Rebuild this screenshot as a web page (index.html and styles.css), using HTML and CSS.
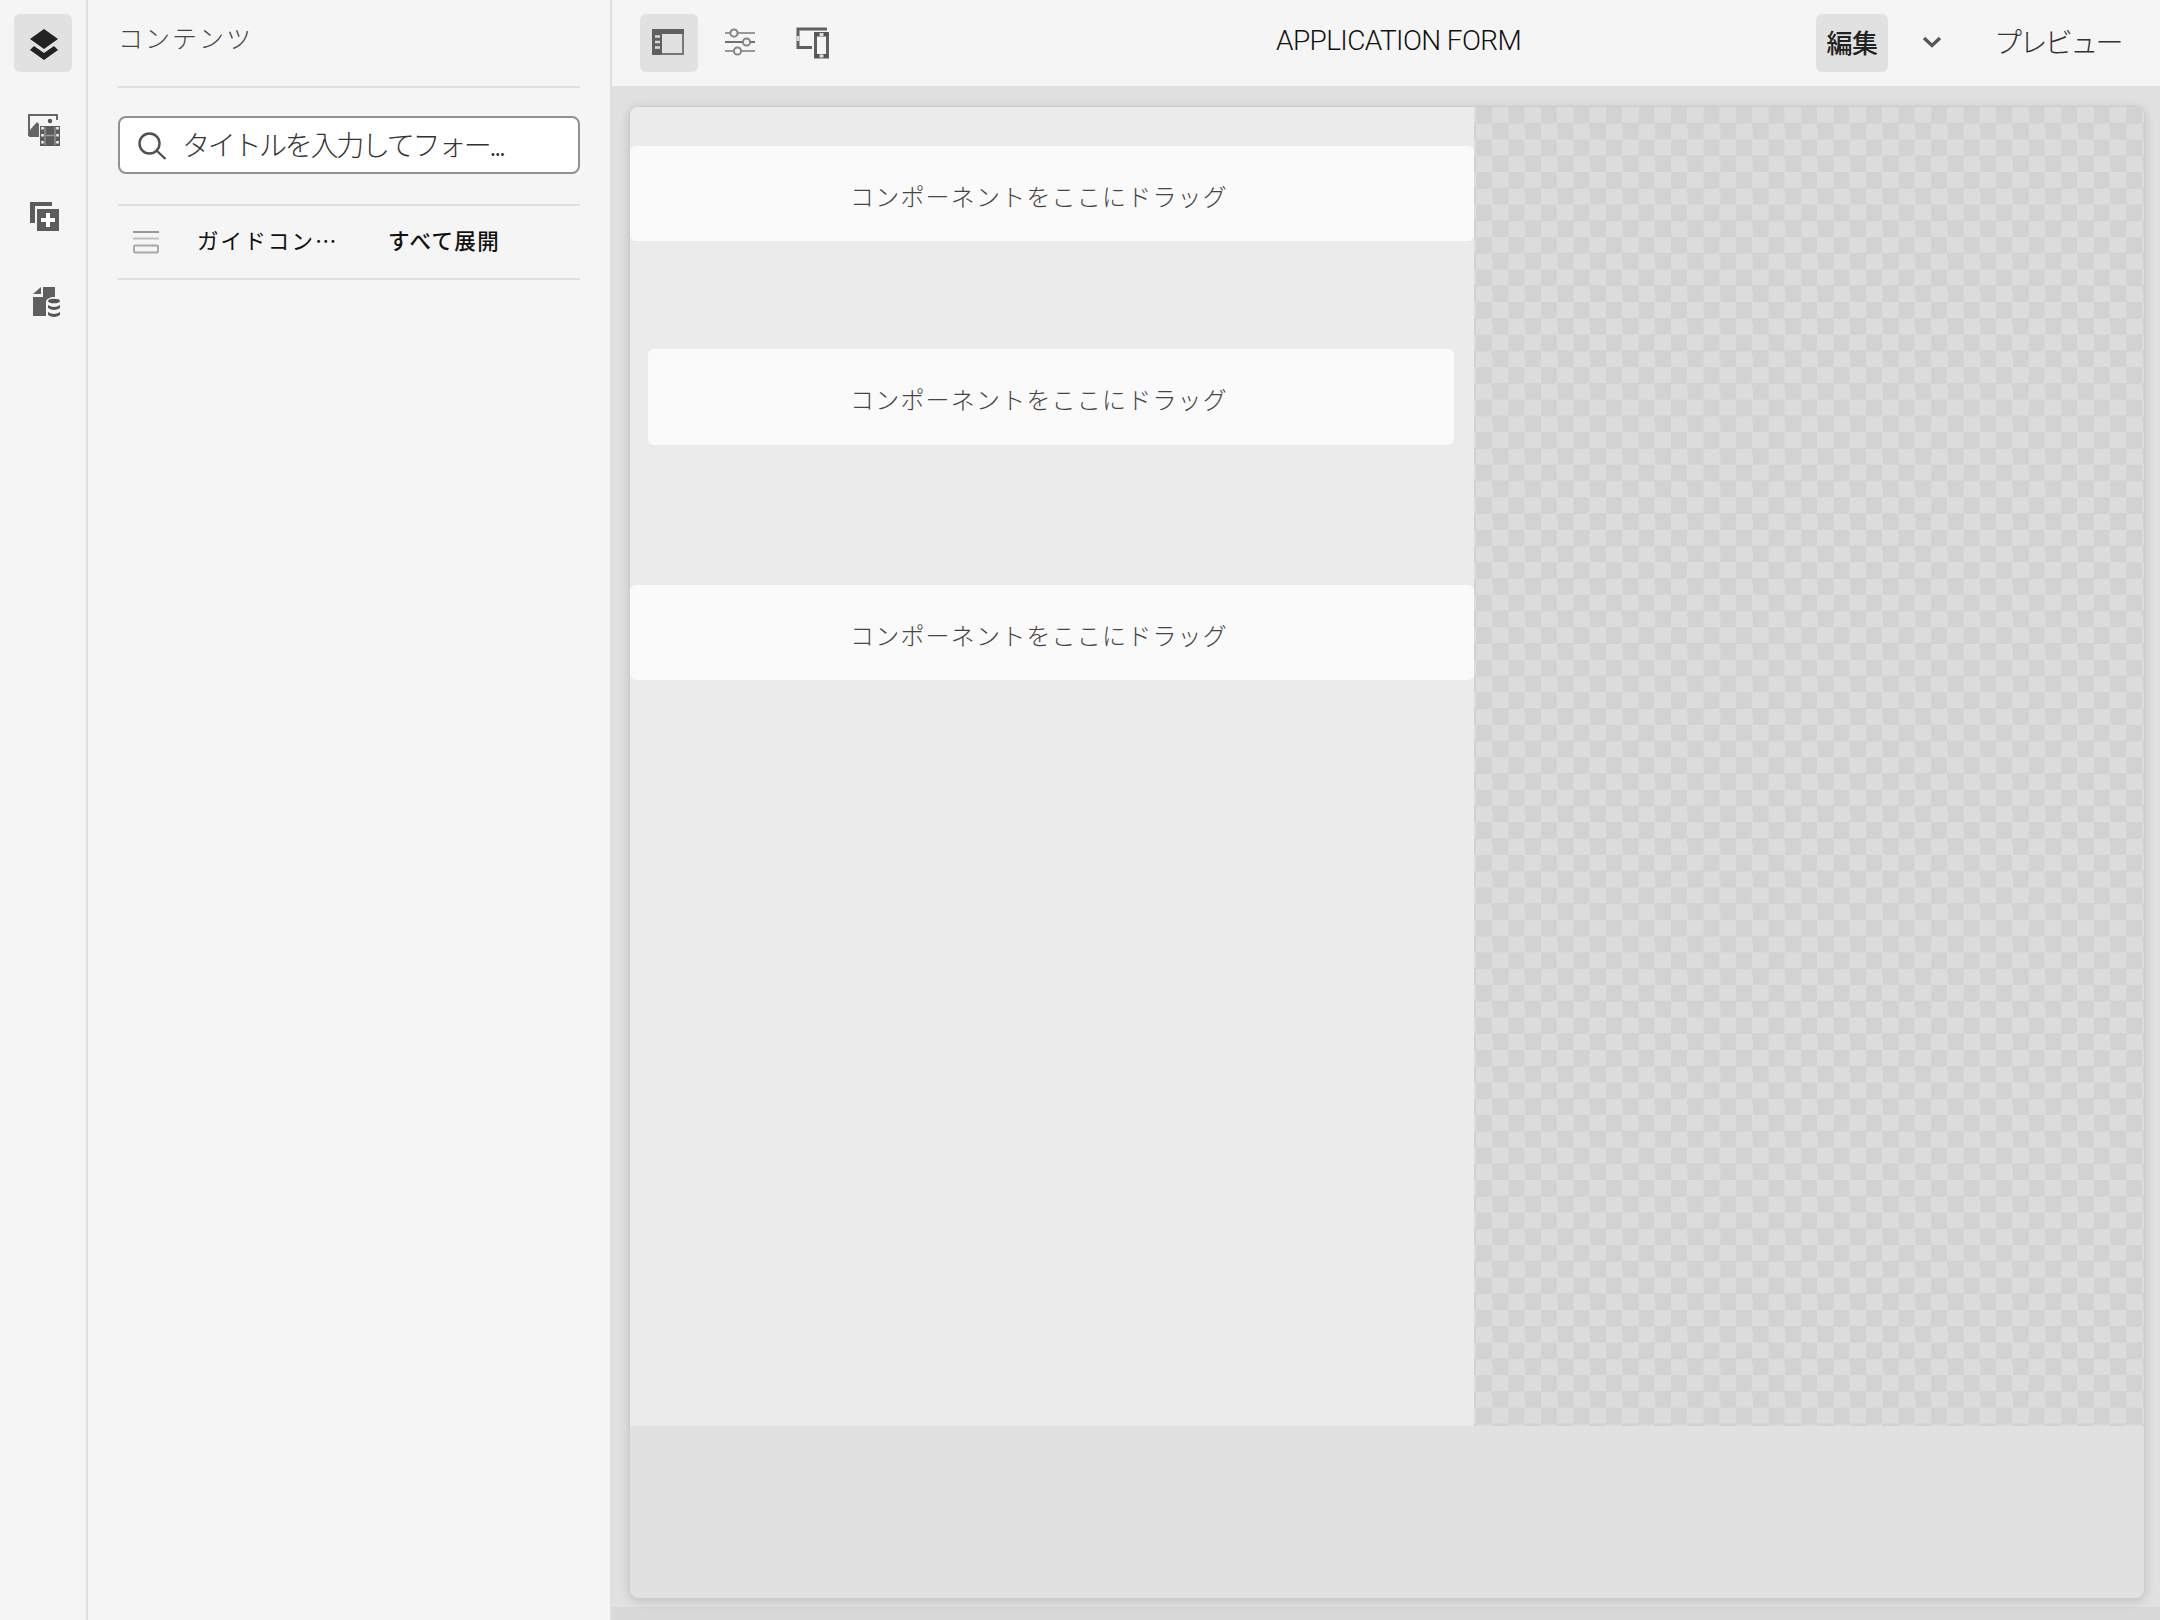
FILE: index.html
```html
<!DOCTYPE html>
<html lang="ja">
<head>
<meta charset="utf-8">
<title>APPLICATION FORM</title>
<link rel="stylesheet" href="styles.css">
</head>
<body>
<div class="app">
  <nav class="rail">
    <button class="tool active"><svg width="32" height="36" viewBox="0 0 32 36"><path fill="#222" d="M16 3 30 13 16 23 2 13ZM6 20 16 27 26 20 30 24 16 34 2 24Z"/></svg></button>
    <button class="tool"><svg class="assets" width="34" height="34" viewBox="0 0 34 34"><path d="M2 23V2H30V7" fill="none" stroke="#666" stroke-width="2"/><path fill="#666" d="M2 18 10 9 12 11V24H2Z"/><circle cx="23" cy="8" r="2.2" fill="#555"/><rect x="13" y="13" width="20" height="20" fill="#5c5c5c"/><path d="M18 14V32M28 14V32" stroke="#aaa"/><path d="M19 22.5H27" stroke="#999" stroke-width="1.5"/><path d="M15.5 14V32M30.5 14V32" stroke="#f5f5f5" stroke-width="2.5" stroke-dasharray="2.5 4.5"/></svg></button>
    <button class="tool"><svg width="32" height="32" viewBox="0 0 32 32"><path fill="#5c5c5c" d="M2 2H24V6H7V23H2ZM9 9H31V31H9Z"/><path stroke="#fff" stroke-width="4" d="M20 13V27M13 20H27"/></svg></button>
    <button class="tool"><svg class="data" width="30" height="34" viewBox="0 0 30 34"><path fill="#5f5f5f" d="M2 9 10 2V9ZM12 2H24V12C19 12 15 14 15 17V31H2V12H12Z"/><ellipse cx="23" cy="16" rx="6" ry="2.3" fill="#555"/><path fill="#555" d="M17 20Q23 24 29 20V23Q23 27 17 23ZM17 27Q23 31 29 27V30Q23 34 17 30Z"/></svg></button>
  </nav>
  <aside class="panel">
    <h1 class="panel-title">コンテンツ</h1>
    <div class="search"><svg width="30" height="30" viewBox="0 0 30 30" fill="none" stroke="#505050" stroke-width="2.4"><circle cx="12.5" cy="12.5" r="10"/><path d="m19.5 19.5 9 8.5"/></svg><span class="hint">タイトルを入力してフォー...</span></div>
    <div class="tree-row"><svg width="28" height="24" viewBox="0 0 28 24" fill="none" stroke-width="2"><path d="M1 2H27" stroke="#999"/><path d="M1 8.500H27" stroke="#c0c0c0"/><rect x="2" y="15.500" width="24" height="7" rx="1" stroke="#aaa"/></svg><span class="node">ガイドコン<span class="dots">…</span></span><span class="expand">すべて展開</span></div>
  </aside>
  <main class="editor">
    <header class="toolbar">
      <div class="group">
        <button class="tool active"><svg width="34" height="28" viewBox="0 0 34 28"><rect x="2" y="2" width="30" height="24" fill="none" stroke="#777" stroke-width="2"/><path fill="#606060" d="M1 1H33V6H1ZM1 6H11V27H1Z"/><path d="M4 8.500H9M4 14H9M4 19.500H9" stroke="#d8d8d8" stroke-width="2.5"/></svg></button>
        <button class="tool"><svg width="30" height="30" viewBox="0 0 30 30" fill="#f5f5f5" stroke="#858585" stroke-width="2"><path d="M0 6H30M0 24H30" stroke="#999"/><path d="M0 15H30" stroke="#707070"/><circle cx="9" cy="6" r="3.6"/><circle cx="21.500" cy="15" r="3.6"/><circle cx="12.500" cy="24" r="3.600"/></svg></button>
        <button class="tool"><svg width="34" height="34" viewBox="0 0 34 34"><path d="M17 22.500H3V4H32" fill="none" stroke="#606060" stroke-width="3"/><path d="M3 11V16" stroke="#d8d8d8" stroke-width="3"/><rect x="20.500" y="8.500" width="12" height="23.500" fill="#f5f5f5" stroke="#606060" stroke-width="3"/><path d="M20 9.500H33M20 31H33" stroke="#555" stroke-width="4"/><path d="M24.500 9.500H28.500M24.500 31H28.500" stroke="#ddd" stroke-width="3"/></svg></button>
      </div>
      <div class="form-name">APPLICATION FORM</div>
      <div class="modes"><button class="edit">編集</button><svg width="22" height="16" viewBox="0 0 22 16"><path d="m3 3 8 7.500L19 3" fill="none" stroke="#555" stroke-width="3.200"/></svg><span class="preview">プレビュー</span></div>
    </header>
    <section class="workspace">
      <div class="canvas">
        <div class="stage">
          <div class="form">
            <div class="drop">コンポーネントをここにドラッグ</div>
            <div class="drop inset">コンポーネントをここにドラッグ</div>
            <div class="drop">コンポーネントをここにドラッグ</div>
          </div>
          <div class="checker"></div>
        </div>
      </div>
    </section>
  </main>
</div>
</body>
</html>
```
FILE: styles.css
```css
* { box-sizing: border-box; }
body { margin: 0; font-family: "Noto Sans CJK JP", sans-serif; font-weight: 300; color: #333; background: #f5f5f5; }
svg { display: block; flex: none; }
button { border: 0; padding: 0; background: none; font: inherit; color: inherit; }
.app { display: flex; width: 2160px; height: 1620px; overflow: hidden; }
.rail { width: 88px; border-right: 2px solid #e0e0e0; padding: 14px 0 0 14px; display: flex; flex-direction: column; gap: 28px; flex: none; }
.tool { width: 58px; height: 58px; border-radius: 6px; display: flex; align-items: center; justify-content: center; flex: none; }
.tool.active { background: #e1e1e1; }
.rail .tool { padding: 1px 0 0 2px; }
.toolbar .tool { padding: 0 2px 2px 0; }
.data { margin-left: 4px; }
.panel { width: 522px; flex: none; padding: 0 30px; }
.panel-title { margin: 0; height: 88px; border-bottom: 2px solid #e0e0e0; padding-top: 19px; font-size: 25px; line-height: 36px; font-weight: 300; letter-spacing: 2px; color: #444; }
.search { margin-top: 28px; height: 58px; border: 2px solid #919191; border-radius: 8px; background: #fff; display: flex; align-items: center; padding: 0 17px; gap: 15px; color: #333; }
.search svg { margin-top: 2px; }
.hint { font-size: 28px; line-height: 36px; letter-spacing: -2.300px; padding-bottom: 2px; white-space: nowrap; }
.tree-row { margin-top: 30px; height: 76px; border-top: 2px solid #e0e0e0; border-bottom: 2px solid #e0e0e0; display: flex; align-items: center; padding-left: 14px; color: #111; font-size: 21.500px; line-height: 30px; font-weight: 400; white-space: nowrap; }
.node { width: 191px; margin-left: 37px; padding-bottom: 5px; letter-spacing: 2.100px; }
.expand { font-weight: 500; padding-bottom: 5px; letter-spacing: 1.400px; }
.editor { flex: 1; min-width: 0; display: flex; flex-direction: column; border-left: 2px solid #e0e0e0; }
.toolbar { height: 86px; flex: none; padding: 14px 33px 14px 28px; display: grid; grid-template-columns: 636px 1fr auto; }
.group { display: flex; gap: 14px; }
.form-name { font: 300 28px/54px Roboto, sans-serif; letter-spacing: -0.600px; color: #111; white-space: nowrap; }
.modes { display: flex; align-items: center; }
.edit { width: 72px; height: 58px; background: #e1e1e1; border-radius: 6px; padding-bottom: 4px; font-size: 26px; font-weight: 500; letter-spacing: -0.500px; color: #222; }
.modes svg { margin: 0 51px 0 33px; }
.preview { width: 133px; padding-bottom: 4px; font-size: 28px; letter-spacing: -2.600px; white-space: nowrap; }
.workspace { flex: 1; background: linear-gradient(#e1e1e1 0 1521px, #d8d8d8 1521px); padding: 21px 16px 22px 18px; }
.canvas { height: 1491px; background: #e1e1e1; border-radius: 8px; overflow: hidden; box-shadow: 0 0 0 1px #ccc, 0 2px 12px rgba(0, 0, 0, .18); }
.stage { display: flex; height: 1319px; }
.form { width: 844px; background: #ebebeb; padding-top: 39px; flex: none; }
.drop { height: 95px; border-radius: 6px; background: #fafafa; padding: 32px 0 0 220px; font-size: 24px; line-height: 36px; letter-spacing: 1.200px; color: #444; white-space: nowrap; }
.drop.inset { margin: 108px 20px 140px 18px; height: 96px; padding-left: 202px; }
.checker { flex: 1; background: repeating-conic-gradient(#dcdcdc 0 25%, #d2d2d2 0 50%) 2px 0 / 32.520px 32.520px; }
```
